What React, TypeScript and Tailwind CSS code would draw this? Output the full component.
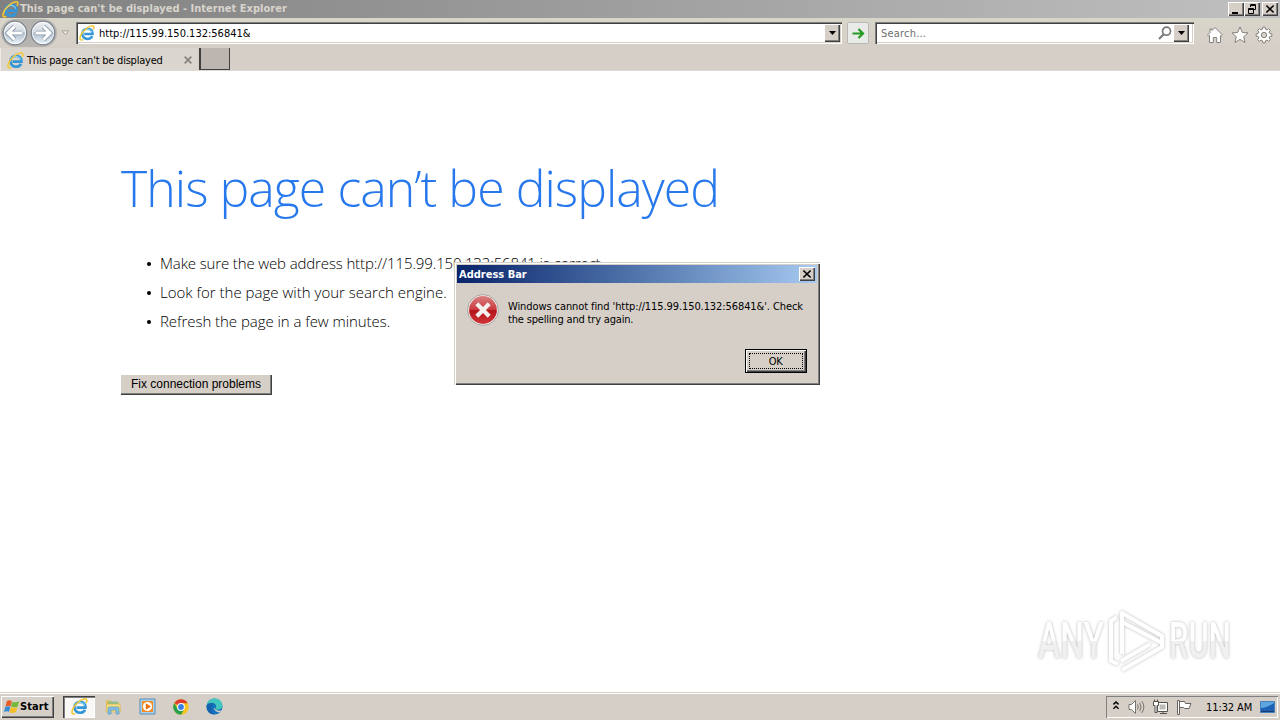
import React from 'react';

const TAHOMA = "font-['DejaVu_Sans_Condensed','DejaVu_Sans',sans-serif] [font-stretch:condensed]";
const SEGOE = "font-['Open_Sans',sans-serif] font-light";
const RAISED = 'bg-[#d6cfc8] shadow-[inset_1px_1px_0_#fff,inset_-1px_-1px_0_#404040,inset_-2px_-2px_0_#808080]';
const SUNKEN = 'bg-white shadow-[inset_1px_1px_0_#808080,inset_2px_2px_0_#404040,inset_-1px_-1px_0_#fff,inset_-2px_-2px_0_#d4d0c8]';

interface IconProps {
  size?: number;
}

const IELogo: React.FC<IconProps> = ({ size = 16 }) => (
  <svg width={size} height={size} viewBox="0 0 16 16" fill="none" className="shrink-0">
    <path d="M13.2 11.2C12.3 13 10.6 13.9 8.5 13.9C5.5 13.9 3.3 11.8 3.3 8.9C3.3 5.9 5.5 3.7 8.6 3.7C11.7 3.7 13.7 5.9 13.6 9H5.2" stroke="#3496d6" strokeWidth="2.5" />
    <path d="M3.9 7.5C4.6 5.3 6.3 4.2 8.5 4.2C10.6 4.2 12.3 5.3 12.9 7.2" stroke="#8fd6f5" strokeWidth="1" />
    <path d="M4 14.5C1.8 15.8.5 14.6 1 12.4C1.9 9 5.2 4.8 9 2.3C12.1.4 15.4 0 14.9 2.7C14.8 3.4 14.5 4 14.1 4.6" stroke="#f2c83a" strokeWidth="1.5" />
  </svg>
);

const ChevronDown = () => (
  <svg width="7" height="4" viewBox="0 0 7 4">
    <path d="M0 0H7L3.5 4Z" fill="#000" />
  </svg>
);

const CloseGlyph = () => (
  <svg width="8" height="8" viewBox="0 0 8 8">
    <path d="M.4.5L7.6 7.5M7.6.5L.4 7.5" stroke="#000" strokeWidth="1.5" />
  </svg>
);

const NavArrow: React.FC<{ forward?: boolean }> = ({ forward }) => (
  <svg width="28" height="26" viewBox="0 0 28 26">
    <defs>
      <linearGradient id="nav" x1="0" y1="0" x2="0" y2="1">
        <stop offset="0" stopColor="#f0f2f4" />
        <stop offset=".45" stopColor="#d3dae1" />
        <stop offset=".5" stopColor="#aebdcd" />
        <stop offset="1" stopColor="#eef6fa" />
      </linearGradient>
    </defs>
    <circle cx="14" cy="13" r="11.8" fill="url(#nav)" stroke="#7d858e" strokeWidth="1.3" />
    <circle cx="14" cy="13" r="10.6" fill="none" stroke="#fff" strokeOpacity=".7" />
    <g transform={forward ? 'rotate(180 14 13)' : undefined} fill="none">
      <path d="M13.5 6.5L7 13L13.5 19.5M7.5 13H21" stroke="#8798ab" strokeWidth="4.6" />
      <path d="M13.5 6.5L7 13L13.5 19.5M7.5 13H21" stroke="#fff" strokeWidth="3" />
    </g>
  </svg>
);

const TitleBar = () => (
  <div className="flex h-[18px] shrink-0 items-center bg-linear-to-r from-[#808080] to-[#c0c0c0] pl-[2px] pr-[2px]">
    <IELogo size={17} />
    <span className={`${TAHOMA} grow whitespace-nowrap pl-px pt-px text-[11px] font-bold tracking-[0.02px] text-[#d8d4cc]`}>
      This page can't be displayed - Internet Explorer
    </span>
    <button className={`${RAISED} flex h-[14px] w-4 items-center justify-center`}>
      <svg width="10" height="9" viewBox="0 0 10 9"><path d="M1 7H7V9H1Z" /></svg>
    </button>
    <button className={`${RAISED} flex h-[14px] w-4 items-center justify-center`}>
      <svg width="10" height="10" viewBox="0 0 10 10" fill="none" stroke="#000">
        <path d="M3.5 3V.5H8.5V5.5H7M3 1.5H9M1.5 9.5V4.5H6.5V9.5ZM1 5.5H7" />
      </svg>
    </button>
    <button className={`${RAISED} ml-[2px] flex h-[14px] w-4 items-center justify-center`}>
      <CloseGlyph />
    </button>
  </div>
);

const NavBar = () => (
  <div className="flex h-[30px] shrink-0 items-center bg-linear-to-b from-[#d8d5c9] to-[#d6cfc8] pl-px">
    <div className="flex h-[28px] items-center rounded-full bg-[#b6b4b0]">
      <NavArrow />
      <NavArrow forward />
    </div>
    <svg width="9" height="6" viewBox="0 0 9 6" className="ml-1">
      <path d="M1 .8H8L4.5 4.8Z" fill="#e8e5df" stroke="#aaa69f" />
    </svg>
    <div className={`${SUNKEN} ml-[6px] flex h-[22px] w-[766px] items-center pl-[3px] pr-[2px]`}>
      <IELogo size={16} />
      <span className={`${TAHOMA} ml-1 grow pt-[2px] text-[11px] text-black`}>http://115.99.150.132:56841&amp;</span>
      <button className={`${RAISED} flex h-[18px] w-4 items-center justify-center`}><ChevronDown /></button>
    </div>
    <button className="ml-[5px] flex h-[22px] w-[22px] items-center justify-center rounded-[2px] border border-[#bbb9b4] bg-[#e9ebe8]">
      <svg width="13" height="11" viewBox="0 0 13 11" fill="none" stroke="#259b24" strokeWidth="2.2">
        <path d="M.5 5.5H11M6.5 1L11 5.5L6.5 10" />
      </svg>
    </button>
    <div className={`${SUNKEN} ml-[6px] flex h-[22px] w-[319px] items-center pl-[6px] pr-[5px]`}>
      <span className={`${TAHOMA} grow pt-[2px] text-[11px] tracking-[0.2px] text-[#6d6d6d]`}>Search...</span>
      <svg width="14" height="14" viewBox="0 0 14 14" fill="none" stroke="#777" className="mr-[1px]">
        <circle cx="8.5" cy="5.2" r="4" strokeWidth="1.7" />
        <path d="M5.7 8.3L1 13" strokeWidth="2" />
      </svg>
      <button className={`${RAISED} flex h-[18px] w-4 items-center justify-center`}><ChevronDown /></button>
    </div>
    <div className="ml-3 mt-[4px] flex items-center gap-[6.5px]">
      <svg width="18" height="18" viewBox="0 0 18 18" fill="#fff" stroke="#85827d">
        <path d="M9 1.5L16.5 9L15.3 10.2L14.5 9.5V16.5H10.7V11.5H7.3V16.5H3.5V9.5L2.7 10.2L1.5 9L4 6.5V3H6V4.5Z" />
      </svg>
      <svg width="18" height="18" viewBox="0 0 18 18" fill="#fff" stroke="#85827d">
        <path d="M9 1L11.3 6.4L17 6.9L12.7 10.7L14 16.5L9 13.4L4 16.5L5.3 10.7L1 6.9L6.7 6.4Z" />
      </svg>
      <svg width="18" height="18" viewBox="0 0 18 18" fill="#fff" stroke="#85827d">
        <path d="M7.6 3.2L7.8 1.2H10.2L10.4 3.2L12 3.9L13.7 2.6L15.4 4.3L14.1 6L14.8 7.6L16.8 7.8V10.2L14.8 10.4L14.1 12L15.4 13.7L13.7 15.4L12 14.1L10.4 14.8L10.2 16.8H7.8L7.6 14.8L6 14.1L4.3 15.4L2.6 13.7L3.9 12L3.2 10.4L1.2 10.2V7.8L3.2 7.6L3.9 6L2.6 4.3L4.3 2.6L6 3.9Z" />
        <circle cx="9" cy="9" r="2.7" fill="#d6d1c9" />
      </svg>
    </div>
  </div>
);

const TabBar = () => (
  <div className="flex h-[23px] shrink-0 items-start border-b border-[#dedad4] bg-[#d6cfc8]">
    <div className="flex h-[22px] w-[198px] items-center border-l border-[#eeebe6] bg-[#dad5cf] pl-[6px] pt-[2px]">
      <IELogo size={17} />
      <span className={`${TAHOMA} ml-[3px] grow whitespace-nowrap pt-[2px] text-[11px] tracking-[-0.22px] text-black`}>This page can't be displayed</span>
      <svg width="8" height="8" viewBox="0 0 8 8" className="mr-[6px]">
        <path d="M.7.7L7.3 7.3M7.3.7L.7 7.3" stroke="#898681" strokeWidth="1.9" />
      </svg>
    </div>
    <div className="ml-px h-[22px] w-[31px] border-b border-l-2 border-r border-[#404040] bg-[#bdb5b0]" />
  </div>
);

const tips = [
  { text: 'Make sure the web address http://115.99.150.132:56841 is correct.', tracking: 'tracking-[-0.13px]' },
  { text: 'Look for the page with your search engine.', tracking: 'tracking-[0.01px]' },
  { text: 'Refresh the page in a few minutes.', tracking: 'tracking-[-0.05px]' },
];

const ErrorPage = () => (
  <main className="flex grow flex-col items-start bg-white pl-[120px] pt-[82px]">
    <h1 className={`${SEGOE} ml-px h-[71px] whitespace-nowrap text-[50px] leading-[70px] tracking-[-0.96px] text-[#2778ec]`}>
      This page can’t be displayed
    </h1>
    <ul className="mt-[25px]">
      {tips.map((tip) => (
        <li key={tip.text} className="flex h-[29px] items-center pl-[27px]">
          <span className="mr-[9px] size-1 rounded-full bg-black" />
          <span className={`${SEGOE} ${tip.tracking} whitespace-nowrap text-[15px] text-black`}>{tip.text}</span>
        </li>
      ))}
    </ul>
    <button className={`${RAISED} mt-[38px] h-[21px] w-[152px] whitespace-nowrap pb-px font-['Liberation_Sans',sans-serif] text-[12px] text-black`}>
      Fix connection problems
    </button>
  </main>
);

const AddressDialog = () => (
  <div className={`${TAHOMA} absolute left-[454px] top-[262px] flex h-[123px] w-[366px] flex-col bg-[#d6cfc8] p-[3px] shadow-[inset_1px_1px_0_#d6cfc8,inset_2px_2px_0_#fff,inset_-1px_-1px_0_#404040,inset_-2px_-2px_0_#808080]`}>
    <div className="flex h-[18px] items-center bg-linear-to-r from-[#0a246a] to-[#a6caf0] pl-[2px] pr-[2px]">
      <span className="grow pt-[2px] text-[11px] font-bold text-white">Address Bar</span>
      <button className={`${RAISED} flex h-[14px] w-4 items-center justify-center`}><CloseGlyph /></button>
    </div>
    <div className="flex pl-[10px] pt-[11px]">
      <svg width="32" height="32" viewBox="0 0 32 32" className="shrink-0">
        <defs>
          <linearGradient id="err" x1="0" y1="0" x2="0" y2="1">
            <stop offset="0" stopColor="#dc8080" />
            <stop offset=".48" stopColor="#c93a3e" />
            <stop offset=".52" stopColor="#b5141b" />
            <stop offset="1" stopColor="#cf3638" />
          </linearGradient>
        </defs>
        <circle cx="16" cy="16" r="15.4" fill="#f0ecea" stroke="#a39c99" strokeWidth=".9" />
        <circle cx="16" cy="16" r="13.9" fill="url(#err)" />
        <path d="M9.8 9.8L22.2 22.2M22.2 9.8L9.8 22.2" stroke="#f3f0ee" strokeWidth="4.2" />
      </svg>
      <p className="ml-[9px] mt-[6px] whitespace-nowrap text-[11px] leading-[13px] text-black">
        <span className="tracking-[-0.09px]">Windows cannot find 'http://115.99.150.132:56841&amp;'. Check</span><br />
        <span className="tracking-[-0.18px]">the spelling and try again.</span>
      </p>
    </div>
    <button className="ml-auto mr-[10px] mt-[23px] h-6 w-[62px] border border-black bg-[#d6cfc8] p-[3px] text-[11px] text-black shadow-[inset_1px_1px_0_#fff,inset_-1px_-1px_0_#404040,inset_-2px_-2px_0_#808080]">
      <span className="flex h-full items-center justify-center border border-dotted border-black pr-px pt-[2px] tracking-[-0.4px]">OK</span>
    </button>
  </div>
);

const Watermark = () => (
  <div className="absolute left-[1038px] top-[608px] flex h-[66px] w-[195px] items-center justify-between font-['Roboto',sans-serif] text-[50px] font-medium leading-none [filter:drop-shadow(0_0_1.5px_#b8b8b8)]">
    <div className="w-[64px]">
      <span className="block w-max origin-left scale-x-[.67] bg-linear-to-b from-white from-50% to-[#f0f0f0] to-50% bg-clip-text text-transparent">ANY</span>
    </div>
    <svg width="58" height="64" viewBox="0 0 58 64" fill="none" stroke="#fff" strokeWidth="4" className="mb-[2px] shrink-0">
      <path d="M15 46V5L55 28M15 14L55 35M10 9L4 13V53L11 56M15 62L55 39V27M14 53L43 36" strokeLinejoin="round" />
    </svg>
    <div className="w-[64px]">
      <span className="block w-max origin-left scale-x-[.62] bg-linear-to-b from-white from-50% to-[#f0f0f0] to-50% bg-clip-text text-transparent">RUN</span>
    </div>
  </div>
);

const Chrome = () => (
  <svg width="16" height="16" viewBox="0 0 16 16">
    <circle cx="8" cy="8" r="7.7" fill="#f7c51d" />
    <path d="M8 8L1.3 4.1A7.7 7.7 0 0 1 14.7 4.2H8Z" fill="#df3b2f" />
    <path d="M1.3 4.1A7.7 7.7 0 0 0 8 15.7L11.3 9.9L8 8L4.7 9.9Z" fill="#2b9f4a" />
    <circle cx="8" cy="8" r="3.9" fill="#fff" />
    <circle cx="8" cy="8" r="2.9" fill="#397ee9" />
  </svg>
);

const Edge = () => (
  <svg width="17" height="17" viewBox="0 0 17 17">
    <circle cx="8.5" cy="8.5" r="8" fill="#1672bd" />
    <path d="M.7 7C1.8 2.8 4.7.5 8.5.5C13.2.5 16.5 4 16.5 7.6C16.5 10.5 14 12 11.5 11.7C9.5 11.4 9.2 10.5 10 9.2C10.8 7.3 8.8 5.1 6 5.1C3.6 5.1 1.8 5.9.7 7Z" fill="#42c6bd" />
    <path d="M16.6 11.8C14 13.2 9.2 13.3 8 9.3C7.6 11.5 9.5 14.2 13.6 14.4Z" fill="#d6cfc8" />
    <path d="M.6 7.4C3 4.2 6.8 4.6 8 6.2C4.3 7 4.5 13.2 8.5 16.5C2.4 16.3.1 11.7.6 7.4Z" fill="#1762ae" />
  </svg>
);

const Taskbar = () => (
  <div className={`${TAHOMA} flex h-[28px] shrink-0 items-center border-t border-[#d6cfc8] bg-[#d6cfc8] shadow-[inset_0_1px_0_#fff] pl-px pr-[2px] text-[11px] text-black`}>
    <button className={`${RAISED} flex h-[22px] w-[53px] items-center pl-[3px] font-bold`}>
      <svg width="16" height="16" viewBox="0 0 16 16" className="shrink-0">
        <path d="M2.8 2.3Q5.2.3 7.8 2.2L6.6 7.3Q4 6 1.5 7.6Z" fill="#e95b28" />
        <path d="M8.3 2.7Q11.5 4.2 15.2 2.3L13.7 7.4Q10.5 9 7 7.6Z" fill="#74b93b" />
        <path d="M1.3 8Q3.9 6.6 6.4 7.8L5 12.8Q2.5 11.4 0 13.1Z" fill="#368bd5" />
        <path d="M6.9 8.1Q10 9.6 13.5 7.9L12 12.9Q8.5 15 5.5 13.2Z" fill="#f5bf28" />
      </svg>
      <span className="pt-[2px] tracking-[0.1px]">Start</span>
    </button>
    <div className="ml-[9px] flex h-[22px] w-8 items-center justify-center bg-[#f9f8f6] shadow-[inset_1px_1px_0_#404040,inset_2px_2px_0_#808080,inset_-1px_-1px_0_#fff]">
      <IELogo size={17} />
    </div>
    <div className="ml-[10px] flex items-center gap-[17px]">
      <svg width="17" height="17" viewBox="0 0 17 17">
        <path d="M1 2.5H6L7 4H14V14H1Z" fill="#e3bd55" />
        <path d="M3.5 3.5H13V7H3.5Z" fill="#8cc08d" />
        <path d="M1.5 6H15L15.7 14H1Z" fill="#f4da80" stroke="#d3ab4c" strokeWidth=".5" />
        <path d="M3 16V10.5Q3 9 5 9H12Q14 9 14 10.5V16H11V12H6V16Z" fill="#83bfe0" stroke="#4f92bd" strokeWidth=".6" />
      </svg>
      <svg width="17" height="17" viewBox="0 0 17 17">
        <path d="M1 1H16V16H1Z" fill="#a7d2ed" stroke="#548fb8" />
        <path d="M3 3H14V14H3Z" fill="#f58c20" />
        <circle cx="8.5" cy="8.5" r="4.6" fill="#fff" />
        <path d="M6.8 5.2V11.8L12 8.5Z" fill="#ec6e0c" />
      </svg>
      <Chrome />
      <Edge />
    </div>
    <div className="ml-auto flex h-[22px] w-[172px] items-center pl-[7px] shadow-[inset_1px_1px_0_#808080,inset_-1px_-1px_0_#fff]">
      <svg width="6" height="9" viewBox="0 0 6 9" fill="none" stroke="#000" strokeWidth="1.5" className="mb-[2px]">
        <path d="M.4 3.5L3 1L5.6 3.5M.4 7.8L3 5.3L5.6 7.8" />
      </svg>
      <svg width="17" height="16" viewBox="0 0 17 16" fill="none" stroke="#76736e" className="ml-[9px]">
        <path d="M1 5.5H3.5L7.5 1.5V14.5L3.5 10.5H1Z" fill="#fff" />
        <path d="M9.5 5.5Q11 8 9.5 10.5M11.7 3.8Q14.3 8 11.7 12.2M13.9 2.2Q17.8 8 13.9 13.8" />
      </svg>
      <svg width="17" height="16" viewBox="0 0 17 16" fill="#fff" stroke="#55524e" className="ml-[7px]">
        <path d="M5.5 3.5H15.5V12.5H5.5ZM8 14.5H15M11 12.5V14" />
        <path d="M7.5 5.5H13.5V10.5H7.5Z" fill="#bdbab4" stroke="none" />
        <path d="M1.5 2.5H6.5V6.5H5V13.5H3V6.5H1.5ZM2.5 2.5V.5M5.5 2.5V.5" />
      </svg>
      <svg width="16" height="16" viewBox="0 0 16 16" fill="#fff" stroke="#66635e" className="ml-[7px]">
        <path d="M1.5 1.5H3.5V15.5H1.5ZM3.5 2.5H8.5L9.5 4.5H15L13 9.5H8.5L7.5 8.5H3.5Z" />
      </svg>
      <span className="ml-[14px] whitespace-nowrap pt-[3px] tracking-[-0.1px]">11:32 AM</span>
      <svg width="15" height="12" viewBox="0 0 15 12" className="ml-[8px]">
        <path d="M.5.5H14.5V11.5H.5Z" fill="#1c61b4" stroke="#467eb9" />
        <path d="M1 7Q7 7 14 2V1H1Z" fill="#5da6df" />
        <path d="M1 10.5H14" stroke="#173d70" />
      </svg>
    </div>
  </div>
);

const App: React.FC = () => (
  <div className="relative flex h-[720px] w-[1280px] flex-col overflow-hidden bg-white">
    <TitleBar />
    <NavBar />
    <TabBar />
    <ErrorPage />
    <Taskbar />
    <Watermark />
    <AddressDialog />
  </div>
);

export default App;
